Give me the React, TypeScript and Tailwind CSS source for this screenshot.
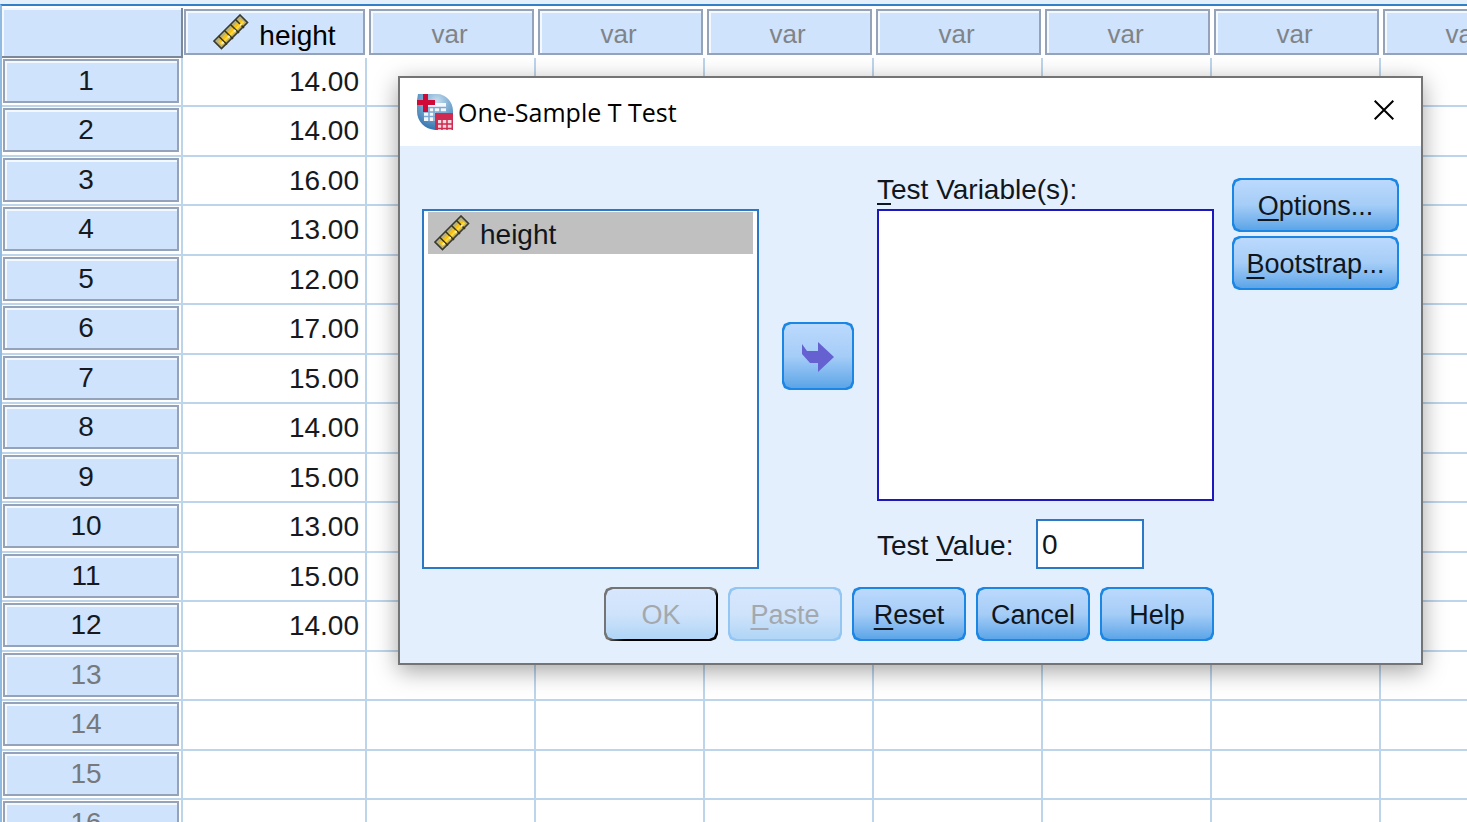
import type { ReactNode } from "react";

const heights = [
  "14.00",
  "14.00",
  "16.00",
  "13.00",
  "12.00",
  "17.00",
  "15.00",
  "14.00",
  "15.00",
  "13.00",
  "15.00",
  "14.00",
];

const rows = Array.from({ length: 16 }, (_, i) => i + 1);
const emptyColumns = Array.from({ length: 7 }, (_, i) => i);

function RulerIcon() {
  return (
    <svg width="36" height="36" viewBox="0 0 36 36" className="shrink-0" aria-hidden="true">
      <path d="M1 27 L27 1 L34.500 8.500 L8.500 34.500 Z" fill="#b5b07c" stroke="#3a3a30" strokeWidth="1.6" />
      <path d="M5 27.500 L27.500 5 L31.500 8.500 L8.500 31.500 Z" fill="#f5c116" />
      <path d="M8 30 L30.500 7.500" stroke="#ffd83a" strokeWidth="2" />
      <path
        d="M5.500 22 L14 30.500 M11.500 16.500 L20 25 M17.500 10.500 L26 19 M22.500 5.500 L31 14"
        stroke="#3b3410"
        strokeWidth="1.5"
      />
      <path
        d="M9 28 l1.500 1.500 M15 22 l1.500 1.500 M21 16 l1.500 1.500 M27 10 l1.500 1.500"
        stroke="#fff0b8"
        strokeWidth="2"
      />
    </svg>
  );
}

function AppIcon() {
  return (
    <svg width="36" height="36" viewBox="0 0 36 36" className="shrink-0" aria-hidden="true">
      <defs>
        <radialGradient id="globe" cx="0.55" cy="0.2" r="0.8">
          <stop offset="0" stopColor="#c9deef" />
          <stop offset="0.5" stopColor="#78a9d1" />
          <stop offset="1" stopColor="#3474ae" />
        </radialGradient>
      </defs>
      <path d="M1 0 H20 C29 0 36 8 36 17 V36 H18 C8 35 0 28 0 17 V6 Z" fill="url(#globe)" />
      <path d="M11 9 H29 V18 H19 V27 H7 V15 H11 Z" fill="#f4f8fc" />
      <path
        d="M11 13.500 H29 M7 18 H29 M7 22.500 H19 M12 14 V27 M17 13 V27 M23 13 V18"
        stroke="#7ca9d3"
        strokeWidth="1.6"
      />
      <path d="M6 0 H11 V6 H18 V11 H11 V18 H6 V11 H0 V6 H6 Z" fill="#cf0a38" />
      <rect x="18" y="19" width="18" height="17" fill="#cf2a50" />
      <path d="M21 26 H34.500 V36 H21 Z" fill="#f8dbe2" />
      <path
        d="M20 30 H36 M20 34.500 H36 M25 25 V36 M30 25 V36"
        stroke="#cf2a50"
        strokeWidth="1.500"
      />
    </svg>
  );
}

const bevel =
  "[clip-path:polygon(7px_0,calc(100%-7px)_0,calc(100%-2px)_2px,100%_7px,100%_calc(100%-7px),calc(100%-2px)_calc(100%-2px),calc(100%-7px)_100%,7px_100%,2px_calc(100%-2px),0_calc(100%-7px),0_7px,2px_2px)]";

type DialogButtonProps = {
  children: ReactNode;
  className?: string;
  variant?: "normal" | "disabled" | "default";
  label?: string;
};

function DialogButton({ children, className = "", variant = "normal", label }: DialogButtonProps) {
  const frame = {
    normal: "bg-[#1b86e3] text-[#10161d]",
    disabled: "bg-[#94c6f4] text-[#a3a8ae]",
    default: "bg-linear-to-br from-[#747474] from-50% to-black to-60% text-[#a3a8ae]",
  }[variant];
  const face = {
    normal: "from-[#bcd9fd] via-[#a5cdf7] to-[#5ba5e8]",
    disabled: "from-[#d7e7fd] via-[#cfe3fb] to-[#b0d5f6]",
    default: "from-[#d7e7fd] via-[#cfe3fb] to-[#b0d5f6]",
  }[variant];

  return (
    <button
      type="button"
      aria-label={label}
      disabled={variant !== "normal"}
      className={`flex p-0.5 text-[27px] leading-8 ${bevel} ${frame} ${className}`}
    >
      <span className={`flex h-full w-full items-center justify-center bg-linear-to-b pt-0.5 ${bevel} ${face}`}>
        {children}
      </span>
    </button>
  );
}

function Key({ children }: { children: ReactNode }) {
  return (
    <span className="underline decoration-2 underline-offset-4 [text-decoration-skip-ink:none]">
      {children}
    </span>
  );
}

function DataGrid() {
  return (
    <table className="w-max table-fixed border-separate border-spacing-0 text-[28px] leading-8">
      <colgroup>
        <col className="w-[181px]" />
        <col className="w-[184px]" />
        {emptyColumns.map((col) => (
          <col key={col} className="w-[169px]" />
        ))}
      </colgroup>
      <thead>
        <tr className="h-[50px]">
          <td className="border-r-2 border-b-2 border-[#7c8797] bg-[#cfe3fc] shadow-[inset_2px_2px_#f4f9ff]" />
          <th scope="col" className="px-0.5 pt-px pb-[3px] pl-px font-normal">
            <div className="flex h-[46px] items-center justify-center gap-2.5 border-2 border-[#94a3ba] bg-[#cfe3fc] shadow-[inset_2px_2px_#f4f9ff]">
              <RulerIcon />
              <span className="pt-2">height</span>
            </div>
          </th>
          {emptyColumns.map((col) => (
            <th key={col} scope="col" className="px-0.5 pt-px pb-[3px] text-[26px] font-normal text-[#808388]">
              <div className="flex h-[46px] items-center justify-center border-2 border-[#94a3ba] bg-[#cfe3fc] pt-1 pr-1 shadow-[inset_2px_2px_#f4f9ff]">
                var
              </div>
            </th>
          ))}
        </tr>
      </thead>
      <tbody>
        {rows.map((row) => (
          <tr key={row} className="odd:h-[49px] even:h-[50px]">
            <th
              scope="row"
              className={`border-r-2 border-b-2 border-[#bdd5eb] py-px pr-0.5 pl-px align-top font-normal ${row > heights.length ? "text-[#77797c]" : "text-[#16191d]"}`}
            >
              <div className="flex h-11 items-center justify-center border-2 border-[#94a3ba] bg-[#cfe3fc] pr-2.5 shadow-[inset_2px_2px_#f4f9ff]">
                {row}
              </div>
            </th>
            <td className="border-r-2 border-b-2 border-[#bdd5eb] p-0 pr-1.5 text-right text-[#16191d]">
              {heights[row - 1]}
            </td>
            {emptyColumns.map((col) => (
              <td key={col} className="border-r-2 border-b-2 border-[#bdd5eb] p-0" />
            ))}
          </tr>
        ))}
      </tbody>
    </table>
  );
}

function TTestDialog() {
  return (
    <section
      role="dialog"
      aria-labelledby="dialog-title"
      className="absolute top-[76px] left-[398px] border-2 border-[#747474] bg-[#e3effc] shadow-[0_6px_22px_rgba(0,0,0,0.36)]"
    >
      <header className="flex h-[68px] items-center bg-white pr-[27px] pl-[17px]">
        <AppIcon />
        <h1 id="dialog-title" className="pl-[5px] font-['Open_Sans',sans-serif] text-[25px] leading-8 text-black">
          One-Sample T Test
        </h1>
        <button type="button" aria-label="Close" className="ml-auto pb-1">
          <svg width="20" height="20" viewBox="0 0 20 20" aria-hidden="true">
            <path d="M0.700 0.700 L19.300 19.300 M19.300 0.700 L0.700 19.300" stroke="#000" strokeWidth="2" />
          </svg>
        </button>
      </header>

      <div className="flex gap-[18px] px-[22px] pt-8 pb-[22px] text-[28px] leading-8 text-[#10161d]">
        <div>
          <div className="flex gap-[23px]">
            <ul
              aria-label="Variables"
              className="mt-[31px] h-[360px] w-[337px] border-2 border-[#2b79c6] bg-white px-1 py-px"
            >
              <li className="flex h-[42px] items-center gap-2.5 bg-[#c0c0c0] pl-1.5">
                <RulerIcon />
                <span className="pt-1">height</span>
              </li>
            </ul>

            <DialogButton label="Move to Test Variables" className="mt-36 h-[68px] w-[72px]">
              <svg width="32" height="30" viewBox="0 0 32 30" aria-hidden="true">
                <path d="M0 2 L5 9 H16 V0 L32 15 L16 30 V21 H8 L0 12 Z" fill="#6661d0" />
              </svg>
            </DialogButton>

            <div className="flex w-[337px] flex-col">
              <span id="targets-label" className="-mt-1 flex h-[35px] items-start">
                <span>
                  <Key>T</Key>est Variable(s):
                </span>
              </span>
              <ul
                aria-labelledby="targets-label"
                className="h-[292px] border-2 border-[#1c18bd] bg-white"
              />
              <div className="mt-auto flex items-center justify-between pr-[70px]">
                <label htmlFor="test-value" className="pt-1">
                  Test <Key>V</Key>alue:
                </label>
                <input
                  id="test-value"
                  type="text"
                  defaultValue="0"
                  className="h-[50px] w-[108px] border-2 border-[#2b79c6] bg-white px-1 pt-0.5 outline-none"
                />
              </div>
            </div>
          </div>

          <div className="mt-[18px] flex justify-end gap-2.5">
            <DialogButton variant="default" className="h-[54px] w-[114px]">
              OK
            </DialogButton>
            <DialogButton variant="disabled" className="h-[54px] w-[114px]">
              <Key>P</Key>aste
            </DialogButton>
            <DialogButton className="h-[54px] w-[114px]">
              <Key>R</Key>eset
            </DialogButton>
            <DialogButton className="h-[54px] w-[114px]">Cancel</DialogButton>
            <DialogButton className="h-[54px] w-[114px]">Help</DialogButton>
          </div>
        </div>

        <div className="flex flex-col gap-1">
          <DialogButton className="h-[54px] w-[167px]">
            <Key>O</Key>ptions...
          </DialogButton>
          <DialogButton className="h-[54px] w-[167px]">
            <Key>B</Key>ootstrap...
          </DialogButton>
        </div>
      </div>
    </section>
  );
}

export default function App() {
  return (
    <main className="relative h-screen overflow-hidden bg-white font-['Liberation_Sans',Arial,sans-serif]">
      <div className="h-1 bg-[#e3effa]" />
      <div className="border-t-2 border-l-2 border-t-[#3480c8] border-l-[#8fbbe2] pt-0.5">
        <DataGrid />
      </div>
      <TTestDialog />
    </main>
  );
}
